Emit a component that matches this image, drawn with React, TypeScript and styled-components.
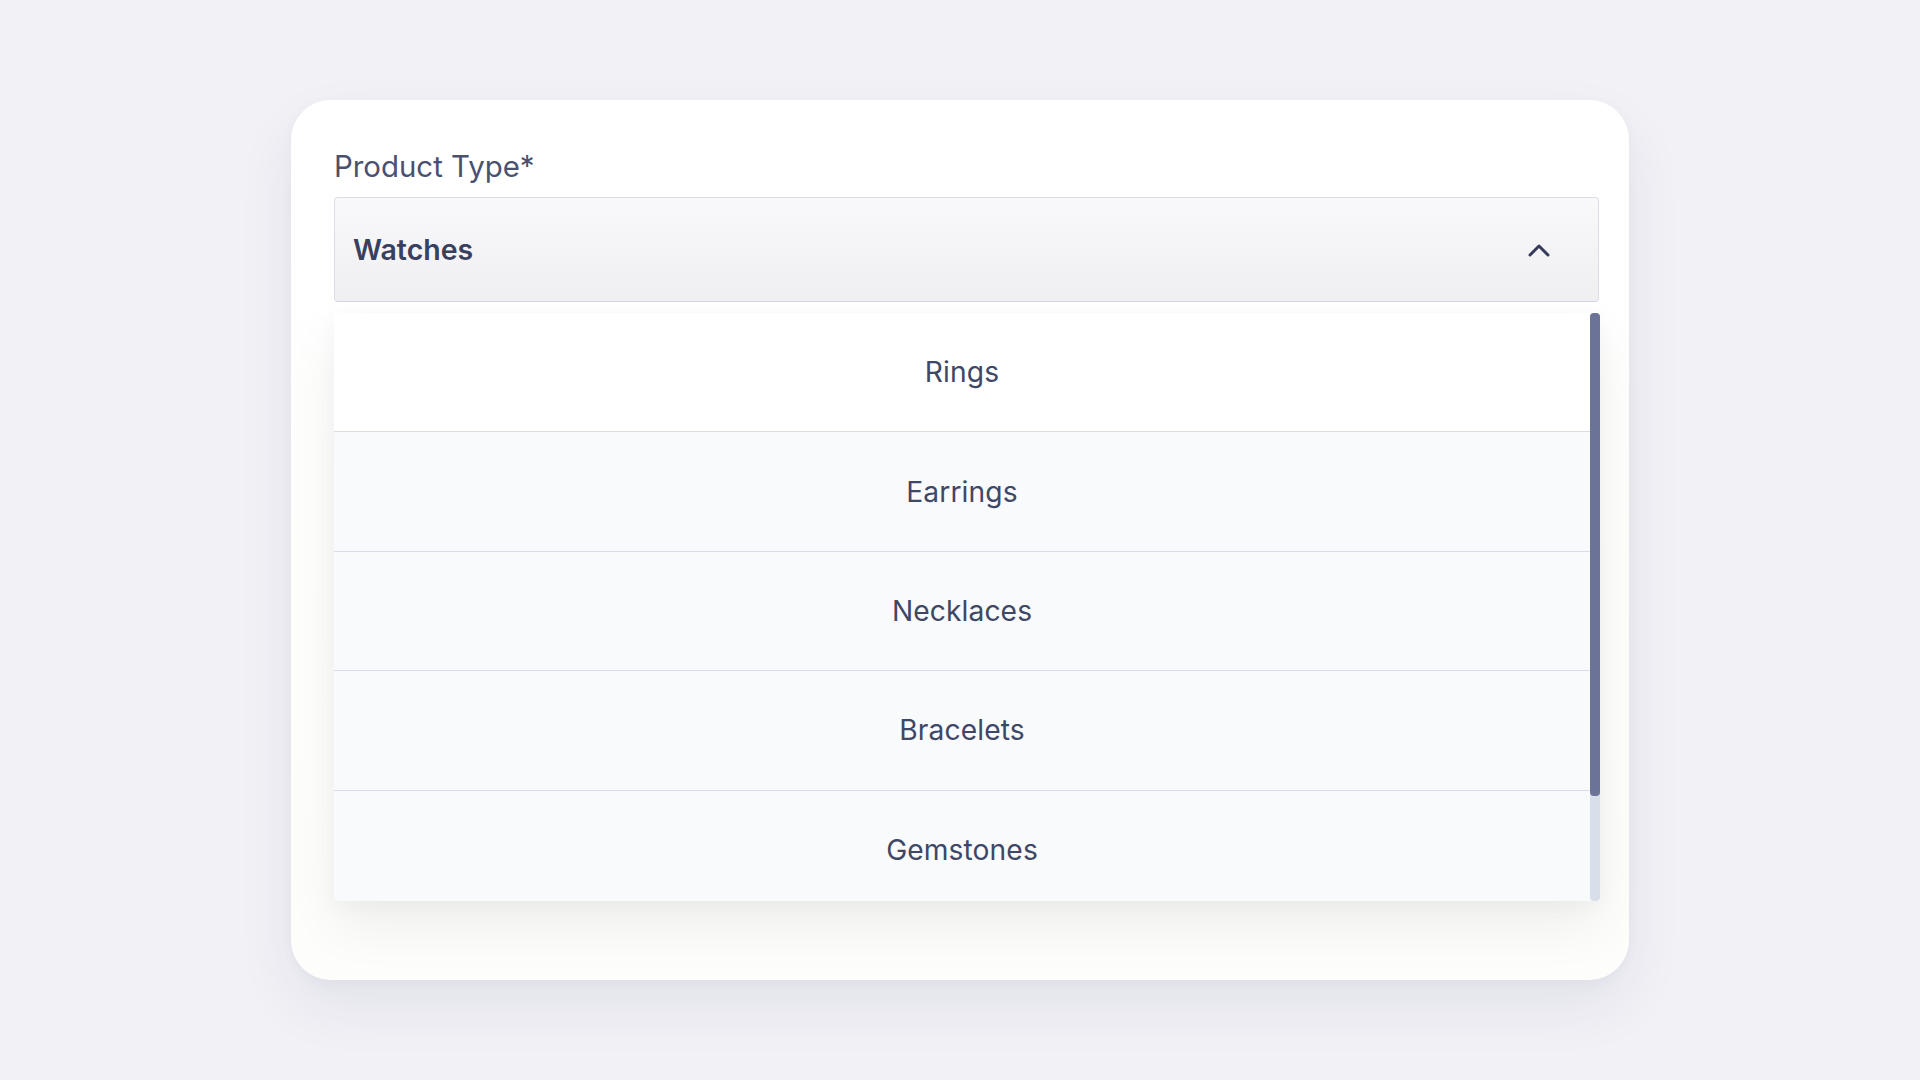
import React from "react";
import styled, { createGlobalStyle } from "styled-components";

const GlobalStyle = createGlobalStyle`
  html, body {
    margin: 0;
    padding: 0;
    background: #f1f1f6;
    font-family: Inter, "Noto Sans", "Liberation Sans", sans-serif;
  }
  * { box-sizing: border-box; }
`;

const Page = styled.div`
  min-height: 100vh;
  display: flex;
  align-items: center;
  justify-content: center;
`;

const Card = styled.div`
  width: 1338px;
  height: 880px;
  padding: 49px 29px 0 43px;
  border-radius: 40px;
  background: linear-gradient(180deg, #ffffff 0%, #fdfdfb 100%);
  box-shadow: 0 26px 60px rgba(40, 40, 90, 0.07), 0 4px 14px rgba(40, 40, 90, 0.03);
  display: flex;
  flex-direction: column;
`;

const Label = styled.label`
  font-size: 29.4px;
  line-height: 36px;
  font-weight: 400;
  color: #4a5170;
  margin-bottom: 12px;
`;

const SelectBox = styled.div`
  height: 105px;
  border: 1.5px solid #dadeea;
  border-bottom-color: #d2d6e5;
  border-radius: 4px;
  background: linear-gradient(180deg, #f9f9fb 0%, #efeff2 100%);
  display: flex;
  align-items: center;
  justify-content: space-between;
  padding: 0 48px 0 18px;
  margin-right: 1px;
`;

const SelectValue = styled.span`
  font-size: 28.5px;
  font-weight: 600;
  color: #38405e;
`;

const List = styled.div`
  margin-top: 11px;
  height: 588px;
  display: flex;
  background: #f9fafb;
  box-shadow: 0 26px 50px rgba(20, 20, 40, 0.06), 0 6px 20px rgba(20, 20, 40, 0.03);
`;

const Viewport = styled.div`
  flex: 1;
  overflow: hidden;
`;

const ScrollTrack = styled.div`
  width: 10px;
  flex: none;
  background: #d8deea;
  border-radius: 4px;
`;

const ScrollThumb = styled.div`
  width: 100%;
  background: #6b7399;
  border-radius: 4px;
`;

const Option = styled.div<{ $active?: boolean }>`
  height: 119.4px;
  display: flex;
  align-items: center;
  justify-content: center;
  border-bottom: 1.5px solid #d9dde9;
  background: ${(p) => (p.$active ? "#ffffff" : "#f9fafb")};
  font-size: 28.2px;
  font-weight: 400;
  color: #3f4766;
  letter-spacing: 0.1px;
`;

const Chevron = () => (
  <svg width="22" height="14" viewBox="0 0 22 14" fill="none">
    <polyline
      points="2,12 11,3 20,12"
      stroke="#353c5a"
      strokeWidth="3"
      strokeLinecap="round"
      strokeLinejoin="round"
    />
  </svg>
);

const options = ["Rings", "Earrings", "Necklaces", "Bracelets", "Gemstones", "Pendants"];
const ITEM_H = 119.4;
const VIEW_H = 588;

export default function App() {
  const contentH = options.length * ITEM_H;
  const thumbH = (VIEW_H * VIEW_H) / contentH;
  return (
    <>
      <GlobalStyle />
      <Page>
        <Card>
          <Label>Product Type*</Label>
          <SelectBox>
            <SelectValue>Watches</SelectValue>
            <Chevron />
          </SelectBox>
          <List>
            <Viewport>
              {options.map((o, i) => (
                <Option key={o} $active={i === 0}>
                  {o}
                </Option>
              ))}
            </Viewport>
            <ScrollTrack>
              <ScrollThumb style={{ height: thumbH }} />
            </ScrollTrack>
          </List>
        </Card>
      </Page>
    </>
  );
}
